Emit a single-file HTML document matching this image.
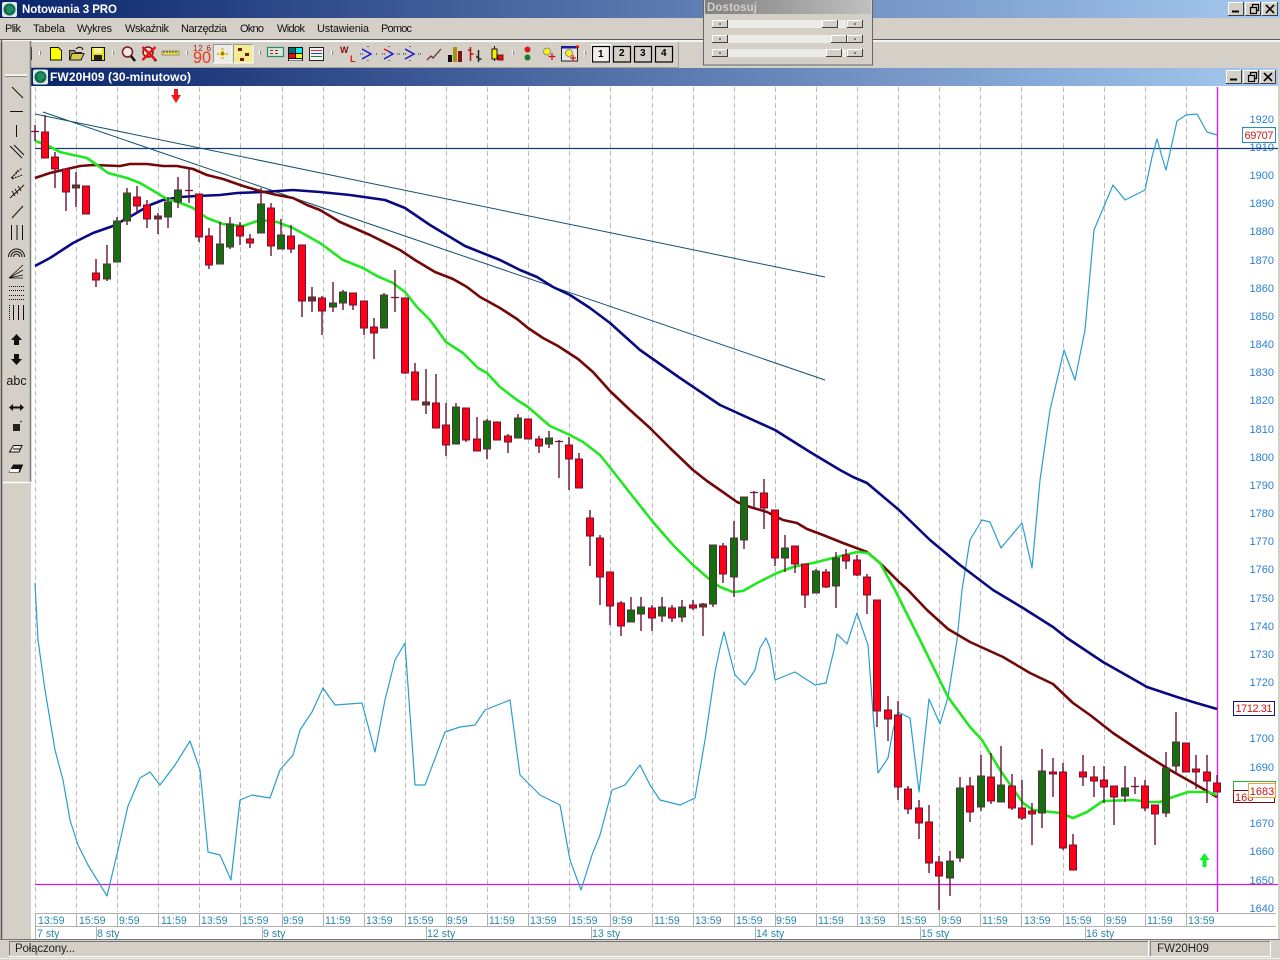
<!DOCTYPE html>
<html lang="pl">
<head>
<meta charset="utf-8">
<title>Notowania 3 PRO</title>
<style>
html,body{margin:0;padding:0;background:#d4d0c8;overflow:hidden}
svg{display:block}
text{font-family:"Liberation Sans",sans-serif}
.m{font-size:11px;fill:#111}
.t{font-size:10.6px;fill:#2a86ad}
.p{font-size:11px;fill:#2c80cf;text-anchor:end}
</style>
</head>
<body>
<svg xmlns="http://www.w3.org/2000/svg" width="1280" height="960" viewBox="0 0 1280 960">
<defs>
<linearGradient id="tb" x1="0" x2="1" y1="0" y2="0"><stop offset="0" stop-color="#0a246a"/><stop offset="1" stop-color="#a6caf0"/></linearGradient>
<linearGradient id="dg" x1="0" x2="1" y1="0" y2="0"><stop offset="0" stop-color="#808080"/><stop offset="1" stop-color="#c0c0c0"/></linearGradient>
<g id="wb"><rect width="16" height="14" fill="#d4d0c8"/><path d="M.5 13.5V.5H15.5" fill="none" stroke="#fff"/><path d="M15.5 0V13.5H0" fill="none" stroke="#404040"/></g>
<g id="sb"><rect width="16" height="8" fill="#d4d0c8"/><path d="M.5 7.5V.5H15.5" fill="none" stroke="#fff"/><path d="M15.5 0V7.5H0" fill="none" stroke="#404040"/></g>
<g id="ico"><rect width="15" height="15" rx="2" fill="#dfe8e4"/><circle cx="7.5" cy="7.5" r="6" fill="#0f6a4a"/><path d="M4 5l3-2 4 2 1 3-3 2-1 2-3-2z" fill="#1f8f62"/></g>
</defs>

<!-- main background -->
<rect width="1280" height="960" fill="#d4d0c8"/>
<!-- title bar -->
<rect width="1280" height="18" fill="url(#tb)"/>
<use href="#ico" x="2" y="2"/>
<text x="22" y="13" font-size="11.5" font-weight="bold" fill="#fff" textLength="95">Notowania 3 PRO</text>
<use href="#wb" x="1228" y="2"/><use href="#wb" x="1245" y="2"/><use href="#wb" x="1262" y="2"/>
<path d="M1232 11.5h7" stroke="#000" stroke-width="2"/>
<path d="M1250.5 7.5h6v6h-6zM1252.5 7V4.5h6v6h-2" fill="none" stroke="#000" stroke-width="1.2"/>
<path d="M1266 5l8 8M1274 5l-8 8" stroke="#000" stroke-width="1.6"/>

<!-- menu -->
<text class="m" x="5" y="32" textLength="16">Plik</text>
<text class="m" x="33" y="32" textLength="32">Tabela</text>
<text class="m" x="77" y="32" textLength="35">Wykres</text>
<text class="m" x="125" y="32" textLength="44">Wskaźnik</text>
<text class="m" x="181" y="32" textLength="46">Narzędzia</text>
<text class="m" x="240" y="32" textLength="24">Okno</text>
<text class="m" x="277" y="32" textLength="28">Widok</text>
<text class="m" x="317" y="32" textLength="52">Ustawienia</text>
<text class="m" x="381" y="32" textLength="31">Pomoc</text>
<path d="M0 39.5H1280" stroke="#5a5a5a"/>
<path d="M0 41H1280" stroke="#fff" stroke-width="1.5"/>

<!-- left strip -->
<path d="M1.5 40V939" stroke="#555" stroke-width="1.5"/>

<!-- top toolbar -->
<path d="M4 41.5H678" stroke="#fff"/>
<path d="M678.5 42V67.5H3" fill="none" stroke="#a8a49c"/>
<path d="M8 45V63" stroke="#fff" stroke-width="2"/><path d="M9.5 45V63" stroke="#777"/>
<path d="M39.5 51v4M112.5 51v4M186.5 51v4M259.5 51v4M331.5 51v4M512.5 51v4M584.5 51v4" stroke="#fff" stroke-width="1.5"/>
<path d="M40.5 51v4M113.5 51v4M187.5 51v4M260.5 51v4M332.5 51v4M513.5 51v4M585.5 51v4" stroke="#888"/>
<!-- grid -->
<path d="M19.5 47.5h12v12h-12zM25.5 47.5v12M19.5 53.5h12" fill="none" stroke="#333"/>
<!-- new doc -->
<path d="M50.5 47.5h8l3 3v9.5h-11z" fill="#ffff00" stroke="#111"/>
<!-- open -->
<path d="M69.5 50.5h5l1 2h6v7h-12z" fill="#a8a040" stroke="#222"/><path d="M72 53.5h12l-3 6.5h-11z" fill="#d8c850" stroke="#222"/><path d="M76 49q3-3 6-1l1 2" fill="none" stroke="#111"/>
<!-- save -->
<rect x="91.5" y="47.5" width="13" height="13" fill="#e8e020" stroke="#111"/><rect x="94" y="48" width="8" height="5" fill="#f8f4a0"/><rect x="94" y="55" width="8" height="5" fill="#222"/>
<!-- magnify -->
<circle cx="127.5" cy="52" r="5" fill="#efe8e0" stroke="#7a1a20" stroke-width="1.5"/><path d="M131 56l4 5" stroke="#111" stroke-width="2.5"/>
<!-- cross magnify -->
<circle cx="148" cy="52" r="5" fill="#efe8e0" stroke="#7a1a20" stroke-width="1.5"/><path d="M152 56l4 5" stroke="#111" stroke-width="2.5"/><path d="M142.5 47l13 13M155.5 47l-13 13" stroke="#f01010" stroke-width="2.5"/>
<!-- ruler -->
<rect x="162" y="51" width="17" height="4" fill="#f0e040" stroke="#666" stroke-width=".6"/><path d="M164 51v2M167 51v2M170 51v2M173 51v2M176 51v2" stroke="#333"/>
<!-- 123/90 -->
<text x="193" y="51" font-size="8" fill="#b01818" textLength="18">12 6</text>
<text x="193" y="63" font-size="17" fill="#e83a1a" textLength="18" lengthAdjust="spacingAndGlyphs">90</text>
<!-- pressed buttons -->
<rect x="213" y="44" width="19" height="19" fill="#ecebe7"/><path d="M213.5 63V44.5H232" fill="none" stroke="#999"/><path d="M232 44.5V63H213" fill="none" stroke="#fff"/>
<path d="M222.5 48v12M217 54h11" stroke="#d8c000" stroke-width="2" stroke-dasharray="2 1"/><rect x="221" y="52" width="3" height="3" fill="#b08000"/>
<rect x="233" y="44" width="20" height="19" fill="#f4ec90"/><path d="M233.5 63V44.5H253" fill="none" stroke="#999"/><path d="M253 44.5V63H233" fill="none" stroke="#fff"/>
<rect x="238" y="48" width="4" height="3" fill="#701808"/><rect x="245" y="53" width="4" height="3" fill="#701808"/><rect x="240" y="58" width="4" height="3" fill="#701808"/>
<!-- table icons -->
<rect x="267.5" y="47.5" width="16" height="9" fill="#d8e8d8" stroke="#2a8a78" stroke-width="1.2"/><path d="M270 50.5h3M275 50.5h3M270 53.5h3M275 53.5h3" stroke="#a02020"/>
<rect x="288" y="47" width="15" height="14" fill="#111"/><rect x="289" y="48" width="6" height="5" fill="#0a6a70"/><rect x="296" y="48" width="6" height="5" fill="#00f0f0"/><rect x="289" y="54" width="6" height="4" fill="#e01010"/><rect x="296" y="54" width="6" height="4" fill="#f8f010"/><rect x="289" y="59" width="13" height="1.5" fill="#eee"/>
<rect x="309.5" y="47.5" width="14" height="13" fill="#f2f2ee" stroke="#222"/><path d="M311 50.5h11" stroke="#d03030"/><path d="M311 53.5h11" stroke="#2040c0"/><path d="M311 56.5h11" stroke="#208030"/>
<!-- W L -->
<text x="340" y="53" font-size="9" font-weight="bold" fill="#801010">W</text>
<text x="350" y="62" font-size="9" font-weight="bold" fill="#f01010">L</text>
<!-- arrows -->
<path d="M360 54h3M376 54h2M368 46v2M368 60v2" stroke="#222" stroke-dasharray="1 1"/><path d="M362 49l9 5-9 5" fill="none" stroke="#1818d8" stroke-width="1.5"/>
<path d="M382 54h3M397 54h3M389 46v2M389 60v2" stroke="#222" stroke-dasharray="1 1"/><path d="M384 49l4 2" stroke="#e01010" stroke-width="1.5"/><path d="M388 51l5 3-9 5" fill="none" stroke="#1818d8" stroke-width="1.5"/>
<path d="M403 54h3M418 54h3M410 46v2M410 60v2" stroke="#222" stroke-dasharray="1 1"/><path d="M405 49l9 5-9 5" fill="none" stroke="#1818d8" stroke-width="1.5"/>
<!-- line chart -->
<path d="M427 60l4-4 2 2 8-9" fill="none" stroke="#703030" stroke-width="1.3"/>
<!-- bars -->
<rect x="448" y="55" width="4" height="7" fill="#111"/><rect x="453" y="47" width="4" height="15" fill="#a89010"/><rect x="458" y="51" width="4" height="11" fill="#801010"/>
<!-- ohlc -->
<path d="M470.5 47v14M468 50h3M470.5 54h3" stroke="#c01010" stroke-width="1.5"/><path d="M478.5 50v12M476 57h3M478.5 59h3" stroke="#222" stroke-width="1.5"/><path d="M475 55h2" stroke="#e8c800" stroke-width="1.5"/>
<!-- candles icon -->
<path d="M494.5 46v15" stroke="#111"/><rect x="492" y="49" width="5" height="10" fill="#f8f000" stroke="#111"/><rect x="498" y="55" width="5" height="5" fill="#e01010" stroke="#801010"/>
<!-- traffic -->
<circle cx="527.5" cy="49.5" r="3" fill="#e01818"/><circle cx="527.5" cy="57.5" r="3" fill="#1a7a30"/>
<!-- yellow plus -->
<circle cx="547" cy="51.5" r="3.5" fill="#f8f020" stroke="#777" stroke-width=".8"/><path d="M552 53v7M548.5 56.5h7" stroke="#e01010" stroke-width="1.3"/>
<!-- box -->
<rect x="561.5" y="46.5" width="16" height="14.5" fill="#e4e8e0" stroke="#222"/><rect x="562" y="46" width="15" height="2.5" fill="#1818a0"/><rect x="576" y="45.5" width="3" height="2.5" fill="#e01010"/><circle cx="569" cy="53" r="3.5" fill="#f8f020" stroke="#777" stroke-width=".8"/><path d="M573 55v6M570 58h6" stroke="#e01010" stroke-width="1.3"/>
<!-- numbered buttons -->
<rect x="591.5" y="44.5" width="19" height="18" fill="#f1f0ec" stroke="#fff"/>
<rect x="592.5" y="46.5" width="17" height="15.5" fill="none" stroke="#000" stroke-width="1.2"/>
<rect x="613.5" y="46.5" width="17" height="15.5" fill="none" stroke="#000" stroke-width="1.2"/>
<rect x="634.5" y="46.5" width="17" height="15.5" fill="none" stroke="#000" stroke-width="1.2"/>
<rect x="655.5" y="46.5" width="17" height="15.5" fill="none" stroke="#000" stroke-width="1.2"/>
<text x="598" y="57" font-size="10" font-weight="bold" fill="#000">1</text>
<text x="619" y="56" font-size="10" font-weight="bold" fill="#000">2</text>
<text x="640" y="56" font-size="10" font-weight="bold" fill="#000">3</text>
<text x="661" y="56" font-size="10" font-weight="bold" fill="#000">4</text>

<!-- child window -->
<rect x="31" y="68" width="1247" height="18" fill="url(#tb)"/>
<use href="#ico" x="33" y="69.5"/>
<text x="50" y="81" font-size="12" font-weight="bold" fill="#fff" textLength="141">FW20H09 (30-minutowo)</text>
<use href="#wb" x="1226" y="70"/><use href="#wb" x="1243" y="70"/><use href="#wb" x="1260" y="70"/>
<path d="M1230 79.5h7" stroke="#000" stroke-width="2"/>
<path d="M1248.5 75.5h6v6h-6zM1250.5 75V72.5h6v6h-2" fill="none" stroke="#000" stroke-width="1.2"/>
<path d="M1264 73l8 8M1272 73l-8 8" stroke="#000" stroke-width="1.6"/>

<!-- chart area -->
<rect x="31" y="86" width="1247" height="853" fill="#fff"/>

<!-- grid -->
<path d="M35.5 87V912M76.5 87V912M117.5 87V912M158.5 87V912M199.5 87V912M240.5 87V912M282.5 87V912M323.5 87V912M364.5 87V912M405.5 87V912M446.5 87V912M487.5 87V912M528.5 87V912M569.5 87V912M610.5 87V912M652.5 87V912M693.5 87V912M734.5 87V912M775.5 87V912M816.5 87V912M857.5 87V912M898.5 87V912M939.5 87V912M980.5 87V912M1021.5 87V912M1063.5 87V912M1104.5 87V912M1145.5 87V912M1186.5 87V912" stroke="#bcbcbc" stroke-dasharray="5 3" fill="none"/>

<!-- axis lines -->
<path d="M35 913.5H1276M35 926.5H1276" stroke="#b0b0b0"/>
<path d="M35.5 913V939M76.5 913V926M117.5 913V926M158.5 913V926M199.5 913V926M240.5 913V926M282.5 913V926M323.5 913V926M364.5 913V926M405.5 913V926M446.5 913V926M487.5 913V926M528.5 913V926M569.5 913V926M610.5 913V926M652.5 913V926M693.5 913V926M734.5 913V926M775.5 913V926M816.5 913V926M857.5 913V926M898.5 913V926M939.5 913V926M980.5 913V926M1021.5 913V926M1063.5 913V926M1104.5 913V926M1145.5 913V926M1186.5 913V926M96.5 927V939M262.5 927V939M426.5 927V939M591.5 927V939M755.5 927V939M920.5 927V939M1085.5 927V939" stroke="#b0b0b0"/>
<path d="M0 939.5H1280" stroke="#777"/>

<!-- time labels -->
<g class="tl">
<text class="t" x="38" y="924">13:59</text><text class="t" x="79" y="924">15:59</text><text class="t" x="119" y="924">9:59</text><text class="t" x="161" y="924">11:59</text><text class="t" x="201" y="924">13:59</text><text class="t" x="242" y="924">15:59</text><text class="t" x="283" y="924">9:59</text><text class="t" x="325" y="924">11:59</text><text class="t" x="366" y="924">13:59</text><text class="t" x="407" y="924">15:59</text><text class="t" x="447" y="924">9:59</text><text class="t" x="489" y="924">11:59</text><text class="t" x="530" y="924">13:59</text><text class="t" x="571" y="924">15:59</text><text class="t" x="612" y="924">9:59</text><text class="t" x="654" y="924">11:59</text><text class="t" x="695" y="924">13:59</text><text class="t" x="736" y="924">15:59</text><text class="t" x="776" y="924">9:59</text><text class="t" x="818" y="924">11:59</text><text class="t" x="859" y="924">13:59</text><text class="t" x="900" y="924">15:59</text><text class="t" x="941" y="924">9:59</text><text class="t" x="982" y="924">11:59</text><text class="t" x="1024" y="924">13:59</text><text class="t" x="1065" y="924">15:59</text><text class="t" x="1106" y="924">9:59</text><text class="t" x="1147" y="924">11:59</text><text class="t" x="1188" y="924">13:59</text>
<text class="t" x="37" y="937">7 sty</text><text class="t" x="97" y="937">8 sty</text><text class="t" x="263" y="937">9 sty</text><text class="t" x="427" y="937">12 sty</text><text class="t" x="592" y="937">13 sty</text><text class="t" x="756" y="937">14 sty</text><text class="t" x="921" y="937">15 sty</text><text class="t" x="1086" y="937">16 sty</text>
</g>

<!-- price labels -->
<text class="p" x="1274" y="123">1920</text><text class="p" x="1274" y="151">1910</text><text class="p" x="1274" y="179">1900</text><text class="p" x="1274" y="207">1890</text><text class="p" x="1274" y="235">1880</text><text class="p" x="1274" y="264">1870</text><text class="p" x="1274" y="292">1860</text><text class="p" x="1274" y="320">1850</text><text class="p" x="1274" y="348">1840</text><text class="p" x="1274" y="376">1830</text><text class="p" x="1274" y="404">1820</text><text class="p" x="1274" y="433">1810</text><text class="p" x="1274" y="461">1800</text><text class="p" x="1274" y="489">1790</text><text class="p" x="1274" y="517">1780</text><text class="p" x="1274" y="545">1770</text><text class="p" x="1274" y="573">1760</text><text class="p" x="1274" y="602">1750</text><text class="p" x="1274" y="630">1740</text><text class="p" x="1274" y="658">1730</text><text class="p" x="1274" y="686">1720</text><text class="p" x="1274" y="742">1700</text><text class="p" x="1274" y="771">1690</text><text class="p" x="1274" y="827">1670</text><text class="p" x="1274" y="855">1660</text><text class="p" x="1274" y="884">1650</text><text class="p" x="1274" y="912">1640</text>

<!-- horizontal / vertical reference lines -->
<path d="M35 148.5H1278" stroke="#123f78" stroke-width="1.2"/>
<path d="M35 884.5H1278" stroke="#d818c8" stroke-width="1.2"/>
<path d="M1217.5 87V912" stroke="#d820d8" stroke-width="1.4"/>

<!-- trend lines -->
<path d="M35 114L825 277M43 112L825 380" stroke="#13506f" fill="none"/>

<!-- light blue indicator -->
<polyline fill="none" stroke="#2a9ed0" stroke-width="1.2" stroke-linejoin="round" points="35,583 38,640 45,690 55,750 63,780 70,820 78,845 88,865 107,896 118,850 128,806 140,778 150,772 160,785 175,765 190,741 200,770 208,852 220,855 231,880 240,800 252,795 270,798 280,770 293,755 300,730 312,712 323,688 335,705 362,703 375,752 385,700 395,660 405,643 415,785 425,785 445,732 460,727 475,725 485,710 510,700 520,775 540,795 560,805 570,860 581,890 592,855 600,835 612,790 625,785 640,765 650,785 660,800 680,805 695,798 705,740 715,672 720,648 724,632 728,648 735,675 745,685 755,670 760,648 766,638 770,648 775,680 795,672 815,685 826,683 834,650 837,634 847,644 857,613 868,645 873,713 878,773 888,758 893,730 898,712 910,718 919,792 929,699 940,724 948,697 957,640 962,590 970,540 982,520 990,522 1001,548 1022,523 1032,568 1040,480 1050,410 1064,350 1075,380 1085,330 1094,230 1113,185 1125,200 1145,190 1152,157 1157,139 1162,157 1166,170 1169,157 1177,121 1186,115 1197,114 1207,132 1217,135"/>

<!-- moving averages -->
<polyline fill="none" stroke="#0a0a80" stroke-width="2.6" stroke-linejoin="round" points="35,266 50,258 73,243 93,233 113,226 133,215 150,205 163,200 180,197 197,196 220,195 237,193 263,192 293,190 320,192 350,195 385,200 405,208 430,225 465,246 500,260 520,270 537,277 553,287 570,295 590,308 610,323 640,350 680,378 720,405 775,430 810,452 840,470 853,477 867,483 880,494 899,510 930,540 960,565 993,590 1023,608 1053,627 1067,638 1103,662 1147,687 1177,697 1193,702 1217,709"/>
<polyline fill="none" stroke="#720808" stroke-width="2.6" stroke-linejoin="round" points="35,178 50,173 63,170 80,166 93,165 120,166 130,164 147,164 163,166 177,166 193,169 207,175 223,179 243,186 260,191 277,195 293,198 307,205 320,210 340,222 370,235 400,250 415,260 435,272 453,279 467,287 480,297 500,308 517,319 528,328 543,338 558,346 578,359 593,372 610,391 630,410 650,428 670,448 693,470 707,481 720,490 737,502 750,507 767,512 783,520 797,523 807,529 823,535 843,543 867,552 880,563 899,582 908,590 927,610 948,629 970,642 1003,657 1030,673 1053,684 1073,703 1090,715 1113,733 1143,753 1170,770 1193,783 1217,797"/>
<polyline fill="none" stroke="#1fe81f" stroke-width="2.6" stroke-linejoin="round" points="35,141 47,145 60,152 73,155 87,158 97,165 108,173 127,178 140,183 152,190 167,199 178,202 193,208 207,218 223,224 243,226 260,220 277,222 293,228 320,243 343,260 363,268 377,276 393,283 405,292 417,307 430,320 446,342 463,353 478,368 487,373 500,387 517,400 528,407 550,426 570,435 583,442 600,455 612,470 630,493 653,522 673,545 693,565 708,578 720,587 733,592 743,591 757,583 777,573 793,567 813,563 837,557 857,552 868,553 880,563 895,590 920,640 948,697 970,727 982,740 1000,770 1023,803 1033,810 1060,813 1073,818 1087,812 1103,801 1133,800 1150,802 1160,802 1173,797 1188,792 1207,792 1217,795"/>

<!-- wicks -->
<path fill="none" stroke="#6a1238" stroke-width="1.4" d="M35 125V141M45 115V158M55 152V188M66 169V211M76 172V207M86 186V214M96 259V287M107 245V281M117 217V262M127 188V225M137 186V212M147 200V228M158 213V234M168 197V228M178 177V208M189 169V203M199 194V242M209 228V269M220 222V264M230 217V249M240 222V245M250 234V248M261 188V233M271 203V256M281 219V249M291 225V253M302 245V317M312 287V312M322 296V335M333 282V312M343 290V310M353 293V310M364 301V335M374 318V359M384 293V328M395 270V312M405 298V374M415 363V400M426 369V414M436 374V428M446 403V456M456 403V444M466 408V442M477 417V451M487 419V459M497 422V440M508 434V453M518 414V438M528 419V439M539 436V453M549 431V448M559 440V478M569 437V490M579 453V488M590 510V566M600 535V605M610 572V625M621 601V636M631 597V622M641 597V631M652 605V631M662 597V622M672 605V622M682 600V622M693 600V610M703 603V636M713 545V607M723 543V583M734 521V597M744 497V549M754 491V508M764 479V529M775 510V566M785 535V572M795 546V573M805 564V608M816 569V593M826 569V588M836 552V608M846 549V569M857 555V576M867 574V614M877 600V727M888 696V741M898 701V800M908 786V814M919 800V839M929 805V873M939 856V910M950 851V896M960 777V862M970 777V822M981 755V811M991 753V804M1001 746V802M1012 774V810M1022 780V820M1032 803V845M1042 749V828M1053 758V797M1063 763V850M1073 834V870M1083 755V786M1094 766V797M1104 766V803M1114 786V825M1125 766V802M1135 777V794M1145 780V811M1155 805V845M1166 752V817M1176 712V772M1186 743V772M1196 755V789M1207 755V803M1217 775V792"/>
<!-- doji -->
<path fill="none" stroke="#6a1238" stroke-width="1.2" d="M31 131.5H39M185 190.5H193M391 297.5H399M555 441.5H563M750 492.5H758M1131 786.5H1139"/>

<!-- red bodies -->
<path fill="#fe0018" stroke="#6e1430" d="M41.5 132h7V158h-7zM51.5 157h7V169h-7zM62.5 169h7V192h-7zM82.5 186h7V214h-7zM92.5 273h7V280h-7zM133.5 197h7V206h-7zM143.5 205h7V219h-7zM195.5 194h7V237h-7zM205.5 236h7V265h-7zM236.5 226h7V236h-7zM246.5 239h7V243h-7zM267.5 208h7V246h-7zM287.5 236h7V249h-7zM298.5 245h7V301h-7zM318.5 298h7V311h-7zM349.5 293h7V305h-7zM360.5 301h7V328h-7zM370.5 327h7V333h-7zM401.5 298h7V373h-7zM411.5 372h7V400h-7zM432.5 403h7V428h-7zM442.5 425h7V445h-7zM462.5 408h7V440h-7zM473.5 439h7V451h-7zM493.5 422h7V440h-7zM504.5 436h7V442h-7zM524.5 419h7V439h-7zM535.5 439h7V446h-7zM565.5 445h7V459h-7zM575.5 459h7V488h-7zM586.5 518h7V536h-7zM596.5 538h7V577h-7zM606.5 572h7V606h-7zM617.5 603h7V626h-7zM648.5 608h7V618h-7zM668.5 608h7V618h-7zM689.5 605h7V608h-7zM719.5 546h7V574h-7zM760.5 493h7V508h-7zM771.5 510h7V558h-7zM791.5 546h7V564h-7zM801.5 564h7V595h-7zM822.5 572h7V587h-7zM842.5 555h7V561h-7zM853.5 560h7V575h-7zM863.5 577h7V595h-7zM873.5 600h7V711h-7zM884.5 710h7V719h-7zM894.5 715h7V787h-7zM904.5 789h7V809h-7zM915.5 808h7V823h-7zM925.5 822h7V863h-7zM935.5 862h7V876h-7zM966.5 786h7V812h-7zM987.5 777h7V801h-7zM1008.5 786h7V808h-7zM1018.5 808h7V818h-7zM1028.5 811h7V814h-7zM1049.5 772h7V774h-7zM1059.5 772h7V848h-7zM1069.5 845h7V870h-7zM1079.5 772h7V777h-7zM1090.5 777h7V781h-7zM1100.5 780h7V787h-7zM1110.5 786h7V797h-7zM1141.5 786h7V808h-7zM1151.5 805h7V814h-7zM1182.5 743h7V772h-7zM1192.5 769h7V772h-7zM1203.5 772h7V781h-7zM1213.5 783h7V792h-7z"/>
<!-- green bodies -->
<path fill="#14700f" stroke="#56303a" d="M103.5 264h7V279h-7zM113.5 221h7V262h-7zM123.5 193h7V221h-7zM164.5 202h7V217h-7zM174.5 190h7V202h-7zM216.5 244h7V264h-7zM226.5 224h7V247h-7zM257.5 204h7V233h-7zM277.5 235h7V249h-7zM329.5 303h7V307h-7zM339.5 292h7V303h-7zM380.5 295h7V328h-7zM452.5 407h7V444h-7zM483.5 421h7V449h-7zM514.5 418h7V438h-7zM545.5 438h7V444h-7zM627.5 610h7V622h-7zM637.5 607h7V614h-7zM658.5 607h7V616h-7zM678.5 607h7V617h-7zM709.5 545h7V604h-7zM730.5 538h7V577h-7zM740.5 497h7V540h-7zM781.5 548h7V558h-7zM812.5 571h7V593h-7zM832.5 558h7V586h-7zM946.5 861h7V878h-7zM956.5 788h7V858h-7zM977.5 776h7V807h-7zM997.5 785h7V802h-7zM1038.5 771h7V813h-7zM1121.5 788h7V796h-7zM1162.5 768h7V813h-7zM1172.5 742h7V766h-7z"/>
<!-- thin neutral bodies -->
<path fill="#6a3030" stroke="#5a2a30" d="M72.5 185h7V188h-7zM154.5 216h7V219h-7zM308.5 297h7V301h-7zM422.5 402h7V405h-7zM699.5 604h7V607h-7z"/>

<!-- arrows -->
<path d="M174 89h4v6h3l-5 8-5-8h3z" fill="#f01818"/>
<path d="M1204.5 853l5 7h-3v7h-4v-7h-3z" fill="#12f02a"/>

<!-- value boxes -->
<rect x="1242.5" y="127.5" width="33" height="15" fill="#fff" stroke="#2a8ac0"/>
<text x="1259" y="139" font-size="11" fill="#c81818" text-anchor="middle" textLength="29">69707</text>
<rect x="1233.5" y="701.5" width="41" height="14" fill="#fff" stroke="#14147c"/>
<text x="1254" y="712" font-size="11" fill="#c81818" text-anchor="middle" textLength="37">1712.31</text>
<rect x="1233.5" y="781.5" width="42" height="12" fill="#fff" stroke="#30b030"/>
<rect x="1233.5" y="790.5" width="41" height="12" fill="#fff" stroke="#7a0c0c"/>
<text x="1235" y="801" font-size="11" fill="#c81818">168</text>
<rect x="1248.5" y="783.5" width="27" height="14" fill="#fff" stroke="#f0a040"/>
<text x="1262" y="795" font-size="11" fill="#c81818" text-anchor="middle">1683</text>

<!-- left toolbar -->
<rect x="3" y="41" width="28" height="441" fill="#d4d0c8"/>
<path d="M30.5 41V482" stroke="#7a7a7a" stroke-width="1.5"/>
<path d="M3 482.5H31" stroke="#fff" stroke-width="1.5"/>
<path d="M5 75H27" stroke="#fff" stroke-width="1.5"/><path d="M5 76.5H27" stroke="#888"/>
<g fill="none" stroke="#111" stroke-width="1">
<path d="M12 87L23 98"/>
<path d="M10 111.5H23"/>
<path d="M16.5 125V137"/>
<path d="M10 146L22 158M14 145L24 155"/>
<path d="M11 178L22 168M12 179L22 175M12 178L18 170" stroke-dasharray="2 1"/>
<path d="M10 198L24 185M12 191l3 5M15 189l3 5M18 186l3 5" stroke-width=".9"/>
<path d="M12 218L23 206"/>
<path d="M11.5 225V240M17 225V240M22.5 225V240"/>
<path d="M8.5 257a8 8 0 0 1 16 0M11 257a5.5 5.5 0 0 1 11 0M13.5 257a3 3 0 0 1 6 0"/>
<path d="M9 278L23 265M9 278L23 270M9 278L23 275M9 278H23" stroke-width=".8"/>
<path d="M9 286.5H24M9 290.5H24M9 295.5H24M9 299.5H24" stroke-dasharray="1 1"/>
<path d="M9.5 305V320" stroke-dasharray="1 1"/><path d="M13.5 305V320M18.5 305V320M23.5 305V320"/>
</g>
<path d="M16.5 334l5.500 6h-3v5h-5v-5h-3z" fill="#111"/>
<path d="M16.5 365l5.500-6h-3v-5h-5v5h-3z" fill="#111"/>
<text x="16.5" y="385" font-size="12.5" fill="#111" text-anchor="middle">abc</text>
<path d="M9 407.5l4-3.500v2.500h7V404l4 3.500-4 3.500v-2.500h-7V411z" fill="#111"/>
<path d="M13 424h7v7h-7z" fill="#222"/><path d="M20 422l2-1" stroke="#333"/>
<path d="M9.5 452l4-6.500h8.500l-3 6.500h-9z" fill="#eee" stroke="#111"/><path d="M13 449h8" stroke="#111"/>
<path d="M9.5 472l4-7h9l-3 7h-10z" fill="#111" stroke="#111"/><path d="M10.5 469h9l-1 3h-9z" fill="#fff"/>

<!-- Dostosuj panel -->
<rect x="703.5" y="-1" width="169" height="66" fill="#d4d0c8" stroke="#666"/>
<rect x="705" y="0" width="166" height="14" fill="url(#dg)"/>
<text x="707" y="11" font-size="11.5" font-weight="bold" fill="#d4d0c8" textLength="50">Dostosuj</text>
<rect x="728" y="20" width="118" height="8" fill="#ecebe8"/>
<rect x="728" y="35" width="118" height="8" fill="#ecebe8"/>
<rect x="728" y="49" width="118" height="8" fill="#ecebe8"/>
<use href="#sb" x="712" y="20"/><use href="#sb" x="712" y="35"/><use href="#sb" x="712" y="49"/>
<use href="#sb" x="847" y="20"/><use href="#sb" x="847" y="35"/><use href="#sb" x="847" y="49"/>
<use href="#sb" x="822" y="20"/><use href="#sb" x="831" y="35"/><use href="#sb" x="826" y="49"/>
<path d="M719 24h2M854 24h2M719 39h2M854 39h2M719 53h2M854 53h2" stroke="#222"/>

<!-- status bar -->
<rect x="0" y="940" width="1280" height="20" fill="#d4d0c8"/>
<path d="M9.5 955V941.5H1148" fill="none" stroke="#777"/>
<path d="M9 956.5H1148M1148.5 941V957" stroke="#fff" fill="none"/>
<text x="15" y="952" font-size="11.5" fill="#222" textLength="60">Połączony...</text>
<path d="M1150.5 956V941.5H1270" fill="none" stroke="#888"/>
<path d="M1150 956.5H1270.5V941" fill="none" stroke="#fff"/>
<text x="1183" y="952" font-size="11.5" fill="#222" text-anchor="middle">FW20H09</text>
<path d="M0 958.5H1280" stroke="#f4f2ee"/>
</svg>
</body>
</html>
